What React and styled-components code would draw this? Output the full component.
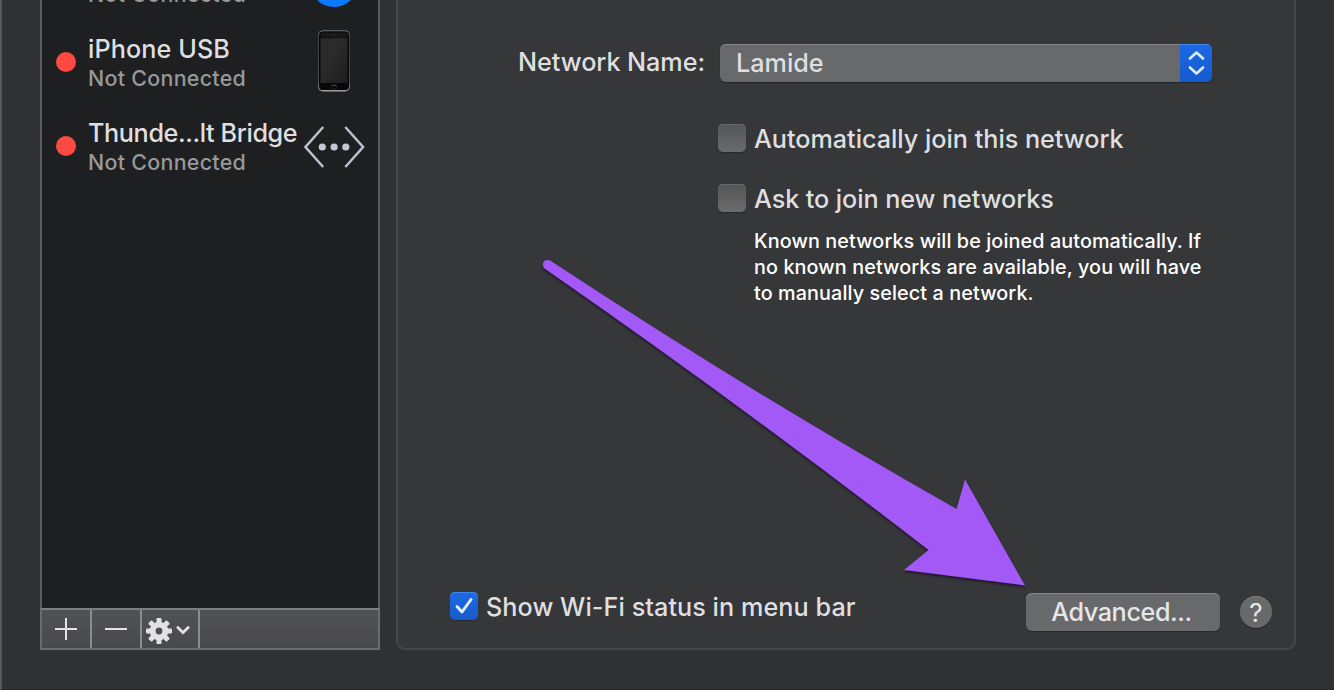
import React from 'react';
import styled, { createGlobalStyle } from 'styled-components';

const Global = createGlobalStyle`
  * { box-sizing: border-box; }
  body {
    margin: 0;
    background: #303133;
    font-family: Inter, "Liberation Sans", sans-serif;
    font-weight: 450;
    color: #dfdfe0;
    overflow: hidden;
  }
`;

const Window = styled.div`
  position: relative;
  display: flex;
  align-items: flex-start;
  gap: 16px;
  width: 1334px;
  height: 690px;
  padding-left: 38px;
  overflow: hidden;
  background: #303133;
  border-left: 2px solid #555658;
  border-bottom: 1px solid #28292b;
`;

const Sidebar = styled.aside`
  display: flex;
  flex-direction: column;
  width: 340px;
  height: 650px;
`;

const ServiceList = styled.div`
  flex: 1;
  min-height: 0;
  overflow: hidden;
  background: #1e1f21;
  border: solid #5b5c5d;
  border-width: 0 2px;
`;

const Services = styled.div`
  margin-top: -64px;
`;

const ServiceRow = styled.div`
  display: flex;
  align-items: center;
  height: 84px;
  padding: 0 13px 0 14px;
`;

const StatusDot = styled.span`
  width: 20px;
  height: 20px;
  flex: none;
  margin-right: 12px;
  border-radius: 50%;
  background: ${(p) => (p.$on ? '#32d74b' : '#ff4a43')};
`;

const ServiceText = styled.div`
  flex: 1;
  min-width: 0;
  padding-top: 2px;
  white-space: nowrap;
`;

const ServiceName = styled.div`
  height: 31px;
  margin-top: -1px;
  font-size: 25.2px;
  line-height: 31px;
  letter-spacing: ${(p) => p.$track || 0}px;
`;

const ServiceState = styled.div`
  height: 27px;
  font-size: 21.4px;
  line-height: 27px;
  letter-spacing: 0.3px;
  color: #98999a;
`;

const ServiceIcon = styled.div`
  display: flex;
  justify-content: center;
  width: 61px;
  flex: none;
  svg { display: block; }
`;

const WifiBadge = styled.div`
  width: 48px;
  height: 48px;
  margin: 10px 1px 0 0;
  border-radius: 50%;
  background: #0a7aff;
`;

const Toolbar = styled.div`
  display: flex;
  height: 42px;
  border: 2px solid #6a6b6c;
  border-top-color: #7d7e7f;
  background: linear-gradient(#515254, #49494b);
`;

const ToolButton = styled.div`
  display: flex;
  align-items: center;
  justify-content: center;
  width: ${(p) => p.$width}px;
  border-right: 2px solid #8b8c8d;
  svg { display: block; }
`;

const Panel = styled.main`
  display: flex;
  flex-direction: column;
  width: 900px;
  height: 650px;
  padding: 44px 22px 16px 52px;
  background: #363739;
  border: 2px solid #464749;
  border-top: 0;
  border-radius: 0 0 9px 9px;
`;

const FieldRow = styled.div`
  display: flex;
  align-items: center;
  height: 38px;
`;

const FieldLabel = styled.div`
  width: 255px;
  margin-right: 15px;
  text-align: right;
  font-size: 25.2px;
  line-height: 32px;
  letter-spacing: -0.05px;
  white-space: nowrap;
  margin-top: -2px;
`;

const Select = styled.div`
  display: flex;
  width: 492px;
  height: 38px;
  border-radius: 6px;
  overflow: hidden;
  background: #68696b;
  box-shadow: inset 0 1px #858687, 0 1px 1px #242527;
`;

const SelectValue = styled.div`
  flex: 1;
  padding-left: 16px;
  font-size: 25.2px;
  line-height: 38px;
`;

const Stepper = styled.div`
  display: flex;
  align-items: center;
  justify-content: center;
  width: 32px;
  background: linear-gradient(#1c69e5, #155bcd);
  box-shadow: inset 0 1px #4584e9;
`;

const Options = styled.div`
  display: flex;
  flex-direction: column;
  gap: 32px;
  padding: 42px 0 0 268px;
`;

const CheckRow = styled.label`
  display: flex;
  align-items: center;
  height: 28px;
  font-size: 25.2px;
  line-height: 32px;
  letter-spacing: ${(p) => p.$track || 0}px;
  white-space: nowrap;
`;

const CheckText = styled.span`
  position: relative;
  top: 1px;
`;

const Box = styled.span`
  display: flex;
  align-items: center;
  justify-content: center;
  width: 28px;
  height: 28px;
  margin-right: 8px;
  border-radius: 5px;
  background: ${(p) => (p.$checked ? 'linear-gradient(#1d6ae8, #1859c8)' : 'linear-gradient(#545556, #6b6b6c)')};
  box-shadow: inset 0 1px ${(p) => (p.$checked ? '#4384ea' : '#6a6b6c')}, 0 1px 1px #28292b;
`;

const Hint = styled.p`
  margin: 16px 0 0 304px;
  font-size: 19.8px;
  font-weight: 500;
  line-height: 26px;
  letter-spacing: 0.1px;
  color: #fff;
  white-space: nowrap;
`;

const Footer = styled.div`
  display: flex;
  align-items: center;
  height: 40px;
  margin-top: auto;
`;

const FooterCheck = styled.div`
  flex: 1;
  margin-top: -12px;
`;

const PushButton = styled.button`
  width: 194px;
  height: 38px;
  margin: 0 20px 0 0;
  padding: 0 3px 0 0;
  border: 0;
  border-radius: 6px;
  background: #68696b;
  box-shadow: inset 0 1px #858687, 0 1px 1px #28292b;
  color: #e6e6e7;
  font: 450 25.2px/38px Inter, "Liberation Sans", sans-serif;
  letter-spacing: -0.4px;
`;

const HelpButton = styled.button`
  width: 32px;
  height: 32px;
  padding: 0;
  border: 0;
  border-radius: 50%;
  background: #68696b;
  box-shadow: inset 0 1px #7c7d7e, 0 1px 1px #28292b;
  color: #e8e8e9;
  font: 400 26px/33px Inter, "Liberation Sans", sans-serif;
`;

const Pointer = styled.svg`
  position: absolute;
  left: 528px;
  top: 250px;
  filter: drop-shadow(0 2px 1px rgba(25, 5, 45, 0.65));
  pointer-events: none;
`;

const PhoneDrawing = styled.svg`
  margin: -3px 2px 0 0;
`;

const BridgeDrawing = styled.svg`
  margin-top: 2px;
`;

const GearDrawing = styled.svg`
  margin: 3px 4px 0 0;
  flex: none;
`;

function Phone() {
  return (
    <PhoneDrawing width="34" height="62" viewBox="0 0 34 62">
      <defs>
        <linearGradient id="glass" x1="0" y1="0" x2="1" y2="1">
          <stop offset="0" stopColor="#29292a" />
          <stop offset="0.4" stopColor="#2b2b2b" />
          <stop offset="1" stopColor="#1d1d1e" />
        </linearGradient>
        <linearGradient id="rim" x1="0" y1="0" x2="0" y2="1">
          <stop offset="0" stopColor="#77787b" />
          <stop offset="0.12" stopColor="#3f4042" />
          <stop offset="0.85" stopColor="#4b4c4e" />
          <stop offset="1" stopColor="#a5a6a8" />
        </linearGradient>
      </defs>
      <rect x="1.5" y="0.8" width="31" height="60" rx="4" fill="#070708" stroke="url(#rim)" strokeWidth="1" />
      <rect x="3.2" y="2.5" width="27.6" height="5" rx="2" fill="#17181a" />
      <rect x="3.5" y="8" width="27" height="45" fill="url(#glass)" />
      <path d="M14 4.8h6" stroke="#2c2c2e" strokeWidth="1" />
      <path d="M14.5 55.5h5" stroke="#59595b" strokeWidth="0.8" />
      <circle cx="17" cy="57" r="2.6" fill="none" stroke="#29292b" strokeWidth="0.8" />
      <path d="M5 60.8h24" stroke="#b0b1b3" strokeWidth="0.9" />
    </PhoneDrawing>
  );
}

function Bridge() {
  return (
    <BridgeDrawing width="61" height="42" viewBox="0 0 61 42">
      <g fill="none" stroke="#b9c1cf" strokeWidth="2.5">
        <path d="M19.2 1L1.5 21L19.2 41" />
        <path d="M41.3 1L59.1 21L41.3 41" />
      </g>
      <g fill="#c3c9d6">
        <circle cx="18.3" cy="21" r="3.6" />
        <circle cx="30.1" cy="21" r="3.6" />
        <circle cx="41.8" cy="21" r="3.6" />
      </g>
    </BridgeDrawing>
  );
}

function GearMenu() {
  return (
    <GearDrawing width="46" height="28" viewBox="0 0 46 28">
      <g transform="translate(14 14)" fill="#e2e2e4">
        {[0, 45, 90, 135].map((a) => (
          <rect key={a} x="-2.5" y="-13" width="5" height="26" rx="1" transform={`rotate(${a})`} />
        ))}
        <circle r="9.3" />
        <circle r="3.4" fill="#4d4e50" />
      </g>
      <path d="M32.8 10.5L38 15.5L43.2 10.5" fill="none" stroke="#e2e2e4" strokeWidth="2.8" strokeLinecap="round" />
    </GearDrawing>
  );
}

const services = [
  { name: '', on: true, icon: <WifiBadge /> },
  { name: 'iPhone USB', track: 0.1, icon: <Phone /> },
  { name: 'Thunde...lt Bridge', track: -0.38, icon: <Bridge /> },
];

export default function App() {
  return (
    <>
      <Global />
      <Window>
        <Sidebar>
          <ServiceList>
            <Services>
              {services.map((s, i) => (
                <ServiceRow key={i}>
                  <StatusDot $on={s.on} />
                  <ServiceText>
                    <ServiceName $track={s.track}>{s.name}</ServiceName>
                    <ServiceState>Not Connected</ServiceState>
                  </ServiceText>
                  <ServiceIcon>{s.icon}</ServiceIcon>
                </ServiceRow>
              ))}
            </Services>
          </ServiceList>
          <Toolbar>
            <ToolButton $width={50}>
              <svg width="22" height="22" viewBox="0 0 22 22">
                <path d="M0 11h22M11 0v22" stroke="#e4e4e5" strokeWidth="2" />
              </svg>
            </ToolButton>
            <ToolButton $width={50}>
              <svg width="22" height="22" viewBox="0 0 22 22">
                <path d="M0 11h22" stroke="#e4e4e5" strokeWidth="2" />
              </svg>
            </ToolButton>
            <ToolButton $width={58}>
              <GearMenu />
            </ToolButton>
          </Toolbar>
        </Sidebar>

        <Panel>
          <FieldRow>
            <FieldLabel>Network Name:</FieldLabel>
            <Select>
              <SelectValue>Lamide</SelectValue>
              <Stepper>
                <svg width="18" height="26" viewBox="0 0 18 26">
                  <path
                    d="M2.9 8.5L9.5 2.5L16 8.5M2.9 17.5L9.5 23.5L16 17.5"
                    fill="none"
                    stroke="#dcebff"
                    strokeWidth="2.6"
                    strokeLinecap="round"
                    strokeLinejoin="round"
                  />
                </svg>
              </Stepper>
            </Select>
          </FieldRow>
          <Options>
            <CheckRow $track={-0.02}>
              <Box />
              <CheckText>Automatically join this network</CheckText>
            </CheckRow>
            <CheckRow $track={-0.08}>
              <Box />
              <CheckText>Ask to join new networks</CheckText>
            </CheckRow>
          </Options>
          <Hint>
            Known networks will be joined automatically. If<br />
            no known networks are available, you will have<br />
            to manually select a network.
          </Hint>
          <Footer>
            <FooterCheck>
              <CheckRow $track={0.06}>
                <Box $checked>
                  <svg width="20" height="20" viewBox="0 0 20 20">
                    <path d="M3 10.5L8 16L17 3.5" fill="none" stroke="#e4efff" strokeWidth="2.9" strokeLinecap="round" strokeLinejoin="round" />
                  </svg>
                </Box>
                <CheckText>Show Wi-Fi status in menu bar</CheckText>
              </CheckRow>
            </FooterCheck>
            <PushButton>Advanced...</PushButton>
            <HelpButton>?</HelpButton>
          </Footer>
        </Panel>

        <Pointer width="510" height="350" viewBox="530 250 510 350">
          <path
            d="M550.5 260.8Q753 394 956.5 509L965 479.5L1025 585.5L904 570L928.5 550Q737 402 545.5 269.3C539.5 264.5 544.5 257.5 550.5 260.8Z"
            fill="#a259f5"
          />
        </Pointer>
      </Window>
    </>
  );
}
